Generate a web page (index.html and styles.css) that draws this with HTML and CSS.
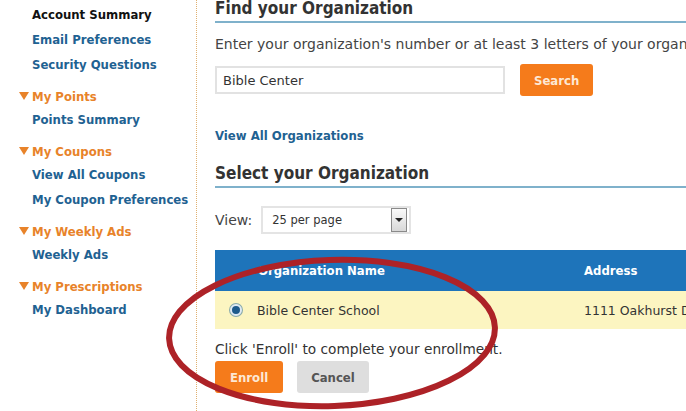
FILE: index.html
```html
<!DOCTYPE html>
<html lang="en">
<head>
    <meta charset="UTF-8">
    <title>Find your Organization</title>
    <link rel="stylesheet" href="styles.css">
</head>
<body>
    <div class="page">
        <div class="sidebar">
            <ul class="nav-group">
                <li class="current">Account Summary</li>
                <li><a href="#">Email Preferences</a></li>
                <li><a href="#">Security Questions</a></li>
            </ul>
            <div class="nav-title">My Points</div>
            <ul class="nav-group">
                <li><a href="#">Points Summary</a></li>
            </ul>
            <div class="nav-title">My Coupons</div>
            <ul class="nav-group">
                <li><a href="#">View All Coupons</a></li>
                <li><a href="#">My Coupon Preferences</a></li>
            </ul>
            <div class="nav-title">My Weekly Ads</div>
            <ul class="nav-group">
                <li><a href="#">Weekly Ads</a></li>
            </ul>
            <div class="nav-title">My Prescriptions</div>
            <ul class="nav-group">
                <li><a href="#">My Dashboard</a></li>
            </ul>
        </div>

        <div class="content">
            <h2>Find your Organization</h2>
            <p class="intro">Enter your organization's number or at least 3 letters of your organization's name.</p>
            <div class="search-row">
                <input type="text" class="search-input" value="Bible Center">
                <button class="btn btn-orange">Search</button>
            </div>
            <a href="#" class="view-all">View All Organizations</a>

            <h2 class="select-title">Select your Organization</h2>
            <div class="view-row">
                <span>View:</span>
                <div class="select-box">
                    <span>25 per page</span>
                    <span class="select-arrow"></span>
                </div>
            </div>

            <div class="org-table">
                <div class="org-head">
                    <div class="col-name">Organization Name</div>
                    <div class="col-addr">Address</div>
                </div>
                <div class="org-row">
                    <span class="radio"></span>
                    <div class="col-name">Bible Center School</div>
                    <div class="col-addr">1111 Oakhurst Dr</div>
                </div>
            </div>

            <p class="note">Click 'Enroll' to complete your enrollment.</p>
            <div class="actions">
                <button class="btn btn-orange">Enroll</button>
                <button class="btn btn-grey">Cancel</button>
            </div>

            <!-- hand drawn circle on the screenshot -->
            <svg class="marker" width="400" height="170" viewBox="0 0 400 170">
                <ellipse cx="172" cy="79" rx="163" ry="73" fill="none" stroke="#ad2227" stroke-width="6" transform="rotate(-2 172 79)"/>
            </svg>
        </div>
    </div>
</body>
</html>
```

FILE: styles.css
```css
body {
    margin: 0;
    font-family: "DejaVu Sans", Verdana, sans-serif;
    background: #fff;
    color: #333;
    overflow: hidden;
}
.page {
    display: flex;
    width: 686px;
    height: 411px;
    overflow: hidden;
}
.sidebar {
    width: 177px;
    padding: 2px 0 0 19px;
    border-right: 1px dotted #e0b070;
    flex-shrink: 0;
    font-family: "DejaVu Sans Condensed", "DejaVu Sans", sans-serif;
}
.nav-group {
    list-style: none;
    margin: 0 0 10px 0;
    padding: 0 0 0 13px;
}
.nav-group li {
    font-size: 13px;
    font-weight: bold;
    line-height: 25px;
    white-space: nowrap;
}
.nav-group li.current {
    color: #111;
}
.nav-group a {
    color: #1f6292;
    text-decoration: none;
}
.nav-title {
    font-size: 13px;
    font-weight: bold;
    color: #e8832a;
    line-height: 20px;
    white-space: nowrap;
}
.nav-title::before {
    content: "";
    display: inline-block;
    border-left: 5px solid transparent;
    border-right: 5px solid transparent;
    border-top: 8px solid #e8832a;
    margin-right: 3px;
    vertical-align: 1px;
}
.content {
    position: relative;
    flex: 1;
    padding-left: 18px;
    min-width: 0;
}
h2 {
    margin: 0;
    font-family: "DejaVu Sans Condensed", "DejaVu Sans", sans-serif;
    font-size: 17px;
    line-height: 20px;
    color: #333;
    border-bottom: 2px solid #7fb1cb;
    padding-bottom: 3px;
    margin-top: -2px;
    white-space: nowrap;
}
.intro {
    margin: 11px 0 0 0;
    font-size: 14px;
    line-height: 20px;
    color: #444;
    white-space: nowrap;
}
.search-row {
    display: flex;
    align-items: center;
    margin-top: 10px;
}
.search-input {
    width: 290px;
    height: 28px;
    box-sizing: border-box;
    border: 2px solid #e2e2e2;
    padding: 0 6px;
    font-family: inherit;
    font-size: 13px;
    color: #333;
}
.btn {
    border: 0;
    border-radius: 3px;
    font-family: "DejaVu Sans Condensed", "DejaVu Sans", sans-serif;
    font-size: 13px;
    font-weight: bold;
    height: 32px;
    padding: 0 14px;
}
.btn-orange {
    background: #f57b1b;
    color: #fde8d4;
}
.actions .btn-orange {
    padding: 0 15px;
}
.btn-grey {
    background: #dedede;
    color: #555;
}
.search-row .btn {
    margin-left: 15px;
}
.view-all {
    display: block;
    margin-top: 32px;
    font-family: "DejaVu Sans Condensed", "DejaVu Sans", sans-serif;
    font-size: 13px;
    font-weight: bold;
    color: #1f6292;
    text-decoration: none;
}
.select-title {
    margin-top: 20px;
}
.view-row {
    display: flex;
    align-items: center;
    margin-top: 18px;
    font-size: 14px;
    color: #444;
}
.select-box {
    display: flex;
    align-items: center;
    justify-content: space-between;
    margin-left: 9px;
    width: 150px;
    height: 28px;
    box-sizing: border-box;
    border: 2px solid #e4e4e4;
    padding: 0 2px 0 9px;
    font-size: 11.5px;
    color: #333;
}
.select-arrow {
    width: 14px;
    height: 22px;
    border: 1px solid #8a8a8a;
    background: linear-gradient(#fafafa, #d8d8d8);
    position: relative;
}
.select-arrow::after {
    content: "";
    position: absolute;
    left: 3px;
    top: 9px;
    border-left: 4px solid transparent;
    border-right: 4px solid transparent;
    border-top: 4px solid #222;
}
.org-table {
    margin-top: 16px;
}
.org-head, .org-row {
    display: flex;
    align-items: center;
    font-size: 13px;
    white-space: nowrap;
}
.org-head {
    height: 41px;
    background: #1e74ba;
    color: #fff;
    font-weight: bold;
    font-family: "DejaVu Sans Condensed", "DejaVu Sans", sans-serif;
}
.org-row {
    height: 38px;
    background: #fcf5c1;
    color: #333;
    font-size: 12.5px;
}
.col-name {
    width: 326px;
    padding-left: 43px;
    flex-shrink: 0;
}
.org-row .col-name {
    width: 327px;
    padding-left: 15px;
}
.radio {
    flex-shrink: 0;
    margin-left: 15px;
    width: 8px;
    height: 8px;
    border-radius: 50%;
    background: #1d5a8c;
    border: 2px solid #dfe9f3;
    box-shadow: 0 0 0 1px #8aa;
}
.note {
    margin: 12px 0 0 0;
    font-size: 13.7px;
    line-height: 17px;
    color: #333;
    white-space: nowrap;
}
.actions {
    display: flex;
    gap: 14px;
    margin-top: 3px;
}
.marker {
    position: absolute;
    left: -37px;
    top: 254px;
    pointer-events: none;
}
```
